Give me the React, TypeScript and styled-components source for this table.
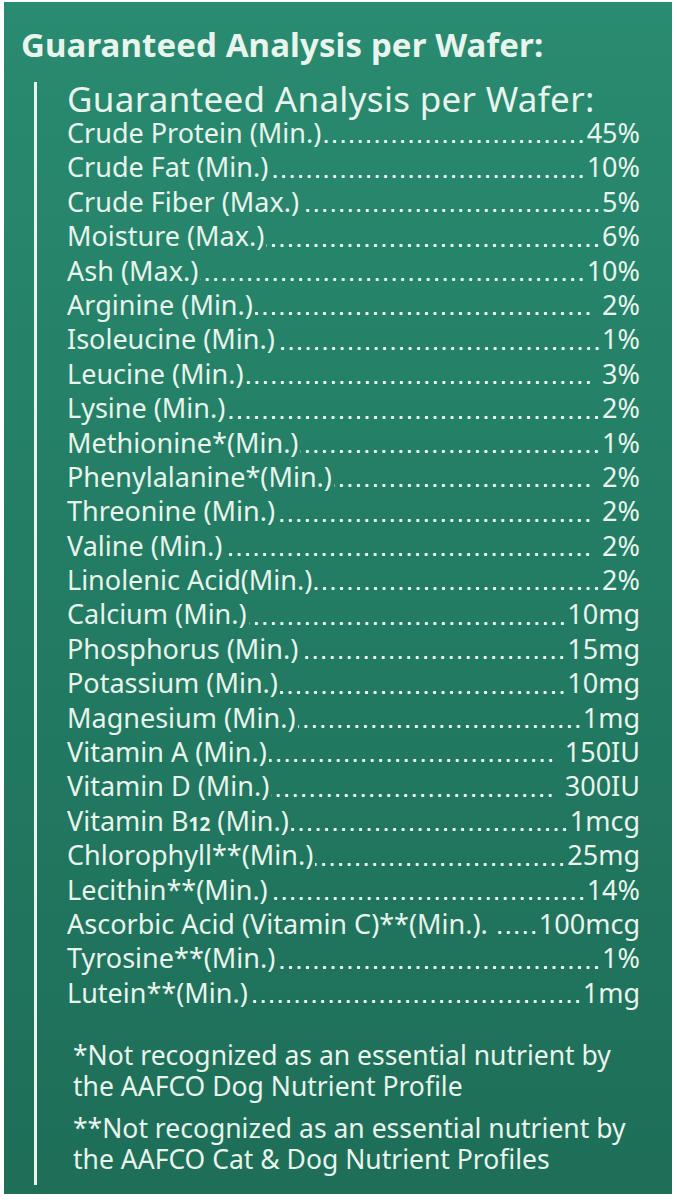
import React from "react";
import styled, { createGlobalStyle } from "styled-components";

const Global = createGlobalStyle`
  html, body { margin: 0; padding: 0; background: #ffffff; }
  body { font-family: "Noto Sans", "Open Sans", sans-serif; }
`;

const INK = "#e8f4ec";

const Panel = styled.div`
  box-sizing: border-box;
  margin: 2px 5px 0 4px;
  height: 1192px;
  padding: 23px 0 0 0;
  background: linear-gradient(180deg, #298b71 0%, #237d64 45%, #1e6e58 100%);
  color: ${INK};
  overflow: hidden;
`;

const Title = styled.h1`
  margin: 0;
  padding-left: 17px;
  font-size: 33px;
  line-height: 40px;
  font-weight: 700;
  letter-spacing: 0.1px;
  white-space: nowrap;
`;

const Body = styled.section`
  box-sizing: border-box;
  margin: 17px 0 0 30px;
  height: 1103px;
  border-left: 3px solid ${INK};
  padding: 0 32px 0 30px;
  display: flex;
  flex-direction: column;
`;

const SubTitle = styled.h2`
  margin: 0;
  font-size: 35px;
  line-height: 34px;
  font-weight: 400;
  letter-spacing: 0.3px;
  white-space: nowrap;
`;

const List = styled.ul`
  list-style: none;
  margin: 0;
  padding: 0;
`;

const Row = styled.li`
  display: flex;
  align-items: baseline;
  height: 34.4px;
  font-size: 27px;
  line-height: 34.4px;
  white-space: nowrap;
`;

const Label = styled.span`
  flex: 0 0 auto;
`;

const Leader = styled.span<{ $gap?: boolean }>`
  flex: 1 1 0;
  min-width: 0;
  align-self: stretch;
  margin-left: ${(p) => (p.$gap ? "9px" : "2px")};
  background-image: radial-gradient(circle, ${INK} 1.4px, transparent 2px);
  background-size: 8.5px 5px;
  background-repeat: repeat-x;
  background-position: right 0 bottom 6px;
`;

const Value = styled.span<{ $spaced?: boolean }>`
  flex: 0 0 auto;
  margin-left: ${(p) => (p.$spaced ? "10px" : "1px")};
`;

const Sub = styled.span`
  font-size: 19px;
  font-weight: 700;
`;

const Notes = styled.div`
  margin-top: 30px;
  padding-left: 6px;
  display: flex;
  flex-direction: column;
  gap: 11px;
`;

const Note = styled.p`
  margin: 0;
  font-size: 26.5px;
  line-height: 31px;
  white-space: nowrap;
`;

type Item = {
  label: React.ReactNode;
  value: string;
  spaced?: boolean;
  gap?: boolean;
};

const items: Item[] = [
  { label: "Crude Protein (Min.)", value: "45%" },
  { label: "Crude Fat (Min.)", value: "10%" },
  { label: "Crude Fiber (Max.)", value: "5%" },
  { label: "Moisture (Max.)", value: "6%" },
  { label: "Ash (Max.)", value: "10%" },
  { label: "Arginine (Min.)", value: "2%", spaced: true },
  { label: "Isoleucine (Min.)", value: "1%" },
  { label: "Leucine (Min.)", value: "3%", spaced: true },
  { label: "Lysine (Min.)", value: "2%" },
  { label: "Methionine*(Min.)", value: "1%" },
  { label: "Phenylalanine*(Min.)", value: "2%", spaced: true },
  { label: "Threonine (Min.)", value: "2%", spaced: true },
  { label: "Valine (Min.)", value: "2%", spaced: true },
  { label: "Linolenic Acid(Min.)", value: "2%" },
  { label: "Calcium (Min.)", value: "10mg" },
  { label: "Phosphorus (Min.)", value: "15mg" },
  { label: "Potassium (Min.)", value: "10mg" },
  { label: "Magnesium (Min.)", value: "1mg" },
  { label: "Vitamin A (Min.)", value: "150IU", spaced: true },
  { label: "Vitamin D (Min.)", value: "300IU", spaced: true },
  {
    label: (
      <>
        Vitamin B<Sub>12</Sub> (Min.)
      </>
    ),
    value: "1mcg",
  },
  { label: "Chlorophyll**(Min.)", value: "25mg" },
  { label: "Lecithin**(Min.)", value: "14%" },
  { label: "Ascorbic Acid (Vitamin C)**(Min.).", value: "100mcg", gap: true },
  { label: "Tyrosine**(Min.)", value: "1%" },
  { label: "Lutein**(Min.)", value: "1mg" },
];

export default function App() {
  return (
    <>
      <Global />
      <Panel>
        <Title>Guaranteed Analysis per Wafer:</Title>
        <Body>
          <SubTitle>Guaranteed Analysis per Wafer:</SubTitle>
          <List>
            {items.map((it, i) => (
              <Row key={i}>
                <Label>{it.label}</Label>
                <Leader $gap={it.gap} />
                <Value $spaced={it.spaced}>{it.value}</Value>
              </Row>
            ))}
          </List>
          <Notes>
            <Note>
              *Not recognized as an essential nutrient by
              <br />
              the AAFCO Dog Nutrient Profile
            </Note>
            <Note>
              **Not recognized as an essential nutrient by
              <br />
              the AAFCO Cat &amp; Dog Nutrient Profiles
            </Note>
          </Notes>
        </Body>
      </Panel>
    </>
  );
}
